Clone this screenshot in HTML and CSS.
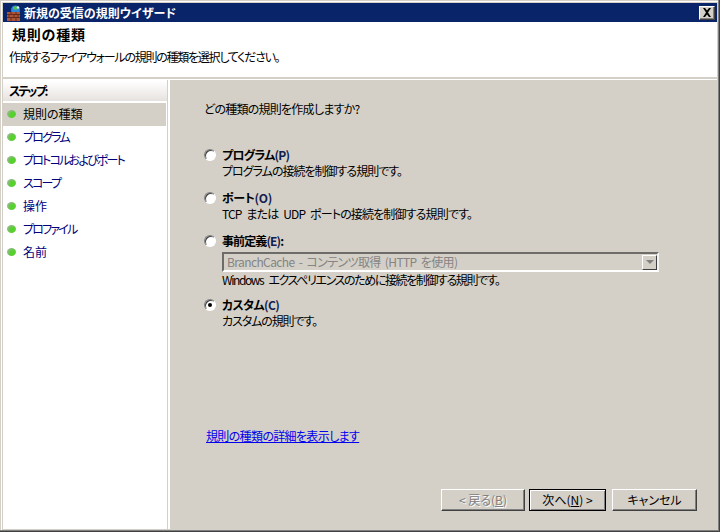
FILE: index.html
```html
<!DOCTYPE html>
<html lang="ja">
<head>
<meta charset="utf-8">
<title>新規の受信の規則ウイザード</title>
<link rel="stylesheet" href="styles.css">
</head>
<body>
<div class="window">
  <div class="titlebar">
    <svg class="app-icon" width="16" height="16" viewBox="0 0 16 16">
      <circle cx="9.500" cy="5" r="4.500" fill="#2f86dd"/>
      <path d="M7 2l3-1 2 2-2 2-3-1z" fill="#4fc04a"/>
      <circle cx="12" cy="2.500" r="1.200" fill="#d8f0ff"/>
      <rect x="1" y="7" width="13" height="9" fill="#a9563a"/>
      <path d="M1 9.500h13M1 12.500h13M5 7v2.500M10 7v2.500M3 9.500v3M8 9.500v3M12 9.500v3M5 12.500v3.500M10 12.500v3.500" stroke="#6a2a1a" fill="none"/>
    </svg>
    <span class="title-text">新規の受信の規則ウイザード</span>
    <button class="close-btn" type="button" aria-label="閉じる">
      <svg width="10" height="9" viewBox="0 0 10 9"><path d="M1 0h2l2 2.500L7 0h2L6 4.500 9 9H7L5 6.500 3 9H1l3-4.500z" fill="#000"/></svg>
    </button>
  </div>
  <header class="header">
    <h1 class="header-title">規則の種類</h1>
    <p class="header-desc">作成するファイアウォールの規則の種類を選択してください。</p>
  </header>
  <div class="body">
    <nav class="steps">
      <div class="steps-head">ステップ:</div>
      <ul class="step-list">
        <li class="step current"><span class="dot"></span>規則の種類</li>
        <li class="step"><span class="dot"></span>プログラム</li>
        <li class="step"><span class="dot"></span>プロトコルおよびポート</li>
        <li class="step"><span class="dot"></span>スコープ</li>
        <li class="step kanji"><span class="dot"></span>操作</li>
        <li class="step"><span class="dot"></span>プロファイル</li>
        <li class="step kanji"><span class="dot"></span>名前</li>
      </ul>
    </nav>
    <main class="main">
      <p class="question">どの種類の規則を作成しますか?</p>
      <div class="options">
        <div class="option opt-program">
          <span class="radio"></span>
          <div class="opt-body">
            <div class="opt-label">プログラム<span class="key">(P)</span></div>
            <div class="opt-desc">プログラムの接続を制御する規則です。</div>
          </div>
        </div>
        <div class="option opt-port">
          <span class="radio"></span>
          <div class="opt-body">
            <div class="opt-label">ポート<span class="key">(O)</span></div>
            <div class="opt-desc">TCP または UDP ポートの接続を制御する規則です。</div>
          </div>
        </div>
        <div class="option opt-predefined">
          <span class="radio"></span>
          <div class="opt-body">
            <div class="opt-label">事前定義<span class="key">(E)</span>:</div>
            <div class="select">
              <span class="select-text">BranchCache - コンテンツ取得 (HTTP を使用)</span>
              <span class="select-arrow"><i class="arrow"></i></span>
            </div>
            <div class="opt-desc">Windows エクスペリエンスのために接続を制御する規則です。</div>
          </div>
        </div>
        <div class="option opt-custom">
          <span class="radio checked"></span>
          <div class="opt-body">
            <div class="opt-label">カスタム<span class="key">(C)</span></div>
            <div class="opt-desc">カスタムの規則です。</div>
          </div>
        </div>
      </div>
      <a class="link" href="#">規則の種類の詳細を表示します</a>
      <div class="buttons">
        <button class="btn disabled" type="button">&lt; 戻る(<u>B</u>)</button>
        <button class="btn default" type="button">次へ(<u>N</u>) &gt;</button>
        <button class="btn cancel" type="button">キャンセル</button>
      </div>
    </main>
  </div>
</div>
</body>
</html>
```

FILE: styles.css
```css
* { box-sizing: border-box; }
html, body { margin: 0; padding: 0; }
body {
  width: 720px;
  height: 532px;
  overflow: hidden;
  background: #d4d0c8;
  font-family: "Noto Sans CJK JP", "Liberation Sans", sans-serif;
  font-size: 12px;
  font-feature-settings: "palt";
  color: #000;
}
.window {
  width: 720px;
  height: 532px;
  display: flex;
  flex-direction: column;
  padding: 3px;
  background: #d4d0c8;
  box-shadow: inset -1px -1px 0 #404040, inset -2px -2px 0 #808080, inset 1px 1px 0 #d4d0c8, inset 2px 2px 0 #fff;
}
.titlebar {
  height: 19px;
  flex: none;
  background: #0a246a;
  display: flex;
  align-items: center;
  padding: 0 2px 0 3px;
  color: #fff;
  font-weight: 700;
  line-height: 18px;
}
.app-icon { flex: none; margin-right: 2px; }
.title-text { flex: 1; }
.close-btn {
  width: 16px;
  height: 14px;
  padding: 0;
  background: #d4d0c8;
  border: 1px solid;
  border-color: #fff #404040 #404040 #fff;
  box-shadow: inset -1px -1px 0 #808080;
  display: flex;
  align-items: center;
  justify-content: center;
}
.header {
  flex: none;
  height: 55px;
  background: #fff;
  padding: 2px 6px 0;
}
.header-title {
  margin: 0 0 0 3px;
  font-size: 14px;
  font-weight: 700;
  line-height: 20px;
  letter-spacing: 0.8px;
}
.header-desc {
  margin: 5px 0 0;
  line-height: 16px;
  letter-spacing: -1.25px;
}
.body {
  flex: 1;
  display: flex;
  min-height: 0;
  border-top: 2px solid #d4d0c8;
  background: #fff;
  padding-top: 1px;
}
.steps {
  width: 165px;
  flex: none;
  background: #fff;
  padding-top: 1px;
  border-right: 1px solid #d4d0c8;
}
.steps-head {
  height: 20px;
  background: linear-gradient(#fff, #e6e2de);
  font-weight: 700;
  line-height: 19px;
  padding-left: 6px;
  margin-bottom: 2px;
  letter-spacing: -2px;
}
.step-list { margin: 0; padding: 0; list-style: none; }
.step {
  height: 23px;
  display: flex;
  align-items: center;
  color: #00007b;
  padding-left: 4px;
  padding-bottom: 2px;
  line-height: 16px;
  letter-spacing: -1.8px;
}
.step.kanji { letter-spacing: 0; }
.step.current {
  background: #d4d0c8;
  color: #000;
  letter-spacing: 0;
  margin-right: 1px;
}
.dot {
  width: 9px;
  height: 8px;
  border-radius: 50%;
  background: radial-gradient(circle at 65% 65%, #58d030 0 35%, #86bd74 60%, #b0b8b0);
  margin: 1px 7px 0 0;
  flex: none;
}
.main {
  flex: 1;
  margin-left: 2px;
  background: #d4d0c8;
  display: flex;
  flex-direction: column;
  padding: 21px 20px 18px 34px;
  min-width: 0;
}
.question {
  margin: 0;
  line-height: 16px;
  letter-spacing: -0.75px;
}
.options { margin-top: 30px; }
.option { display: flex; align-items: flex-start; }
.opt-port { margin-top: 11px; }
.opt-predefined { margin-top: 11px; }
.opt-custom { margin-top: 9px; }
.opt-program .opt-label { letter-spacing: -0.75px; }
.opt-program .opt-desc { letter-spacing: -1px; }
.opt-port .opt-label { letter-spacing: -0.3px; }
.opt-port .opt-desc { letter-spacing: -0.85px; word-spacing: 3px; }
.opt-predefined .opt-label { letter-spacing: -0.9px; }
.opt-predefined .opt-desc { letter-spacing: -1.4px; word-spacing: 4px; }
.opt-custom .opt-label { letter-spacing: -0.6px; }
.opt-custom .opt-desc { letter-spacing: -1.1px; }
.radio {
  width: 12px;
  height: 12px;
  margin: 2px 6px 0 0;
  flex: none;
  border-radius: 50%;
  background: #fff;
  border: 1px solid;
  border-color: #808080 #fff #fff #808080;
  box-shadow: inset 1px 1px 0 #404040;
  position: relative;
}
.radio.checked::after {
  content: "";
  position: absolute;
  left: 3px;
  top: 3px;
  width: 4px;
  height: 4px;
  border-radius: 50%;
  background: #000;
}
.opt-body { flex: 1; }
.opt-label { font-weight: 700; line-height: 16px; }
.key { color: #10204f; }
.opt-desc { line-height: 16px; }
.select {
  width: 437px;
  height: 20px;
  margin: 3px 0 0;
  display: flex;
  align-items: center;
  justify-content: space-between;
  background: #d4d0c8;
  border: 2px solid;
  border-color: #6e6c68 #f4f3f0 #fff #6e6c68;
  color: #848484;
  padding-left: 3px;
  line-height: 16px;
}
.select-text { letter-spacing: -0.6px; word-spacing: 2px; }
.select-arrow {
  width: 15px;
  height: 15px;
  border: 1px solid;
  border-color: #fff #404040 #404040 #fff;
  display: flex;
  align-items: center;
  justify-content: center;
}
.arrow {
  width: 0;
  height: 0;
  border-left: 4px solid transparent;
  border-right: 4px solid transparent;
  border-top: 4px solid #808080;
}
.link {
  margin-top: 99px;
  margin-left: 2px;
  color: #0000ee;
  line-height: 16px;
  letter-spacing: -0.65px;
  align-self: flex-start;
}
.buttons {
  margin-top: auto;
  display: flex;
  justify-content: flex-end;
}
.btn {
  height: 22px;
  padding: 0;
  background: #d4d0c8;
  font: inherit;
  line-height: 16px;
  color: #000;
  border: 1px solid;
  border-color: #fff #404040 #404040 #fff;
  box-shadow: inset -1px -1px 0 #808080;
}
.btn.disabled { width: 84px; color: #808080; text-shadow: 1px 1px 0 #fff; margin-right: 4px; }
.btn.default { width: 77px; border: 1px solid #000; box-shadow: inset 1px 1px 0 #fff, inset -1px -1px 0 #808080; margin-right: 6px; }
.btn.cancel { width: 85px; }
```
